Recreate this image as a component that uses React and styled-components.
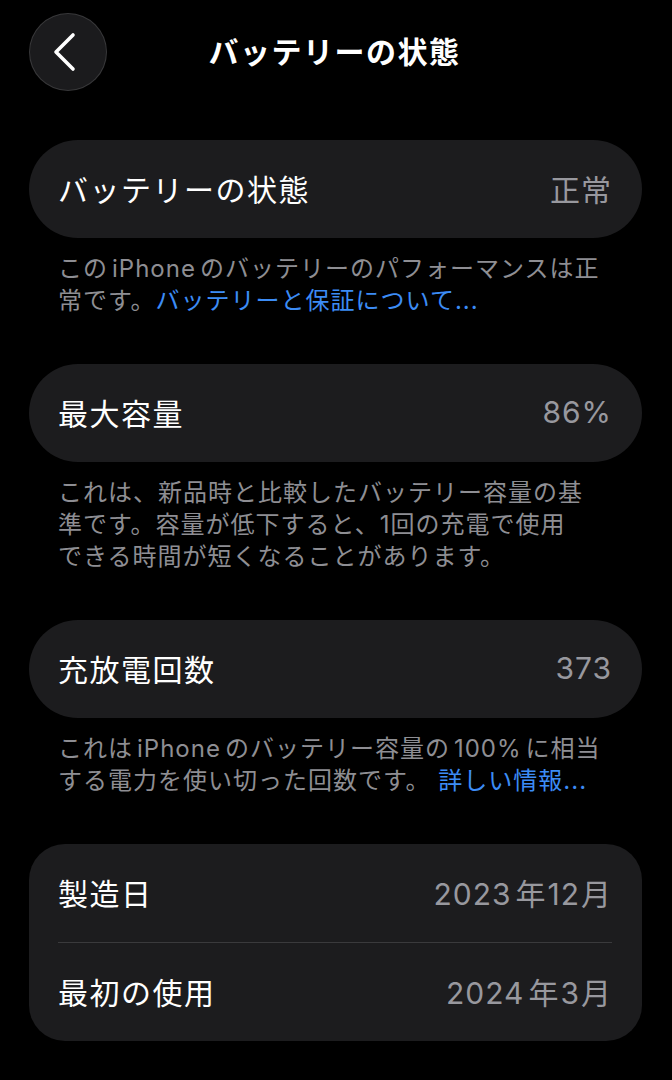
import styled, { createGlobalStyle } from "styled-components";

const GlobalStyle = createGlobalStyle`
  html, body {
    margin: 0;
    padding: 0;
    background: #000000;
  }
  body {
    font-family: Inter, "Noto Sans CJK JP", "Noto Sans", sans-serif;
    -webkit-font-smoothing: antialiased;
  }
`;

// notes hold styled spans, so they are built at render time
function getSections() {
  return [
    {
      rows: [{ label: "バッテリーの状態", value: "正常" }],
      note: (
        <>
          この<Latin>iPhone</Latin>のバッテリーのパフォーマンスは正
          <br />
          常です。<Link>バッテリーと保証について...</Link>
        </>
      ),
    },
    {
      rows: [{ label: "最大容量", value: "86%" }],
      note: (
        <>
          これは、新品時と比較したバッテリー容量の基
          <br />
          準です。容量が低下すると、1回の充電で使用
          <br />
          できる時間が短くなることがあります。
        </>
      ),
    },
    {
      rows: [{ label: "充放電回数", value: "373" }],
      note: (
        <>
          これは<Latin>iPhone</Latin>のバッテリー容量の<Latin>100%</Latin>に相当
          <br />
          する電力を使い切った回数です。 <Link>詳しい情報...</Link>
        </>
      ),
    },
    {
      rows: [
        {
          label: "製造日",
          value: (
            <>
              <Latin>2023</Latin>年<Latin $tight>12</Latin>月
            </>
          ),
        },
        {
          label: "最初の使用",
          value: (
            <>
              <Latin>2024</Latin>年<Latin $tight>3</Latin>月
            </>
          ),
        },
      ],
    },
  ];
}

export default function App() {
  const sections = getSections();

  return (
    <Page>
      <GlobalStyle />
      <Header>
        <BackButton type="button" aria-label="戻る">
          <svg width="30" height="40" viewBox="0 0 30 40" fill="none">
            <path
              d="M22 3 L5 20 L22 37"
              stroke="#ffffff"
              strokeWidth="3.6"
              strokeLinecap="round"
              strokeLinejoin="round"
            />
          </svg>
        </BackButton>
        <Title>バッテリーの状態</Title>
        <span />
      </Header>

      <List>
        {sections.map((s, i) => (
          <Section key={i}>
            <Card $multi={s.rows.length > 1}>
              {s.rows.map((r, j) => (
                <Row key={r.label} $divider={j > 0}>
                  <Label>{r.label}</Label>
                  <Value>{r.value}</Value>
                </Row>
              ))}
            </Card>
            {s.note && <Note>{s.note}</Note>}
          </Section>
        ))}
      </List>
    </Page>
  );
}

/* ================= styles ================= */

const Page = styled.div`
  width: 672px;
  min-height: 1080px;
  box-sizing: border-box;
  padding: 13px 30px 40px 29px;
  background: #000000;
  color: #ffffff;
`;

const Header = styled.header`
  display: grid;
  grid-template-columns: 78px 1fr 78px;
  align-items: center;
  height: 78px;
`;

const BackButton = styled.button`
  width: 78px;
  height: 78px;
  border-radius: 50%;
  background: #1b1b1d;
  border: 1px solid rgba(255, 255, 255, 0.13);
  display: grid;
  place-items: center;
  padding: 0 4px 0 0;
  cursor: pointer;
`;

const Title = styled.h1`
  margin: 0 0 4px;
  text-align: center;
  font-size: 30px;
  font-weight: 700;
  letter-spacing: 1.5px;
  color: #ffffff;
  transform: translateX(-1px);
`;

const List = styled.div`
  margin-top: 49px;
  display: flex;
  flex-direction: column;
  gap: 47px;
`;

const Section = styled.section`
  display: flex;
  flex-direction: column;
`;

const Card = styled.div`
  background: #1c1c1e;
  border-radius: ${(p) => (p.$multi ? "36px" : "49px")};
  padding: 0 30px 0 29px;
`;

const Row = styled.div`
  display: flex;
  align-items: center;
  justify-content: space-between;
  height: 98px;
  border-top: ${(p) => (p.$divider ? "1.5px solid #3a3a3c" : "none")};
`;

const Label = styled.div`
  font-size: 30px;
  letter-spacing: 1.5px;
  color: #ffffff;
  margin-top: -2px;
`;

const Value = styled.div`
  font-size: 30px;
  letter-spacing: 1px;
  color: #98989e;
  margin-top: -2px;
`;

const Latin = styled.span`
  margin: 0 ${(p) => (p.$tight ? "1px" : "4px")};
`;

const Note = styled.p`
  margin: 15px 0 0;
  padding-left: 29px;
  font-size: 24px;
  line-height: 32px;
  letter-spacing: 1px;
  color: #8e8e93;
  white-space: nowrap;
`;

const Link = styled.span`
  color: #3c8cf5;
`;
